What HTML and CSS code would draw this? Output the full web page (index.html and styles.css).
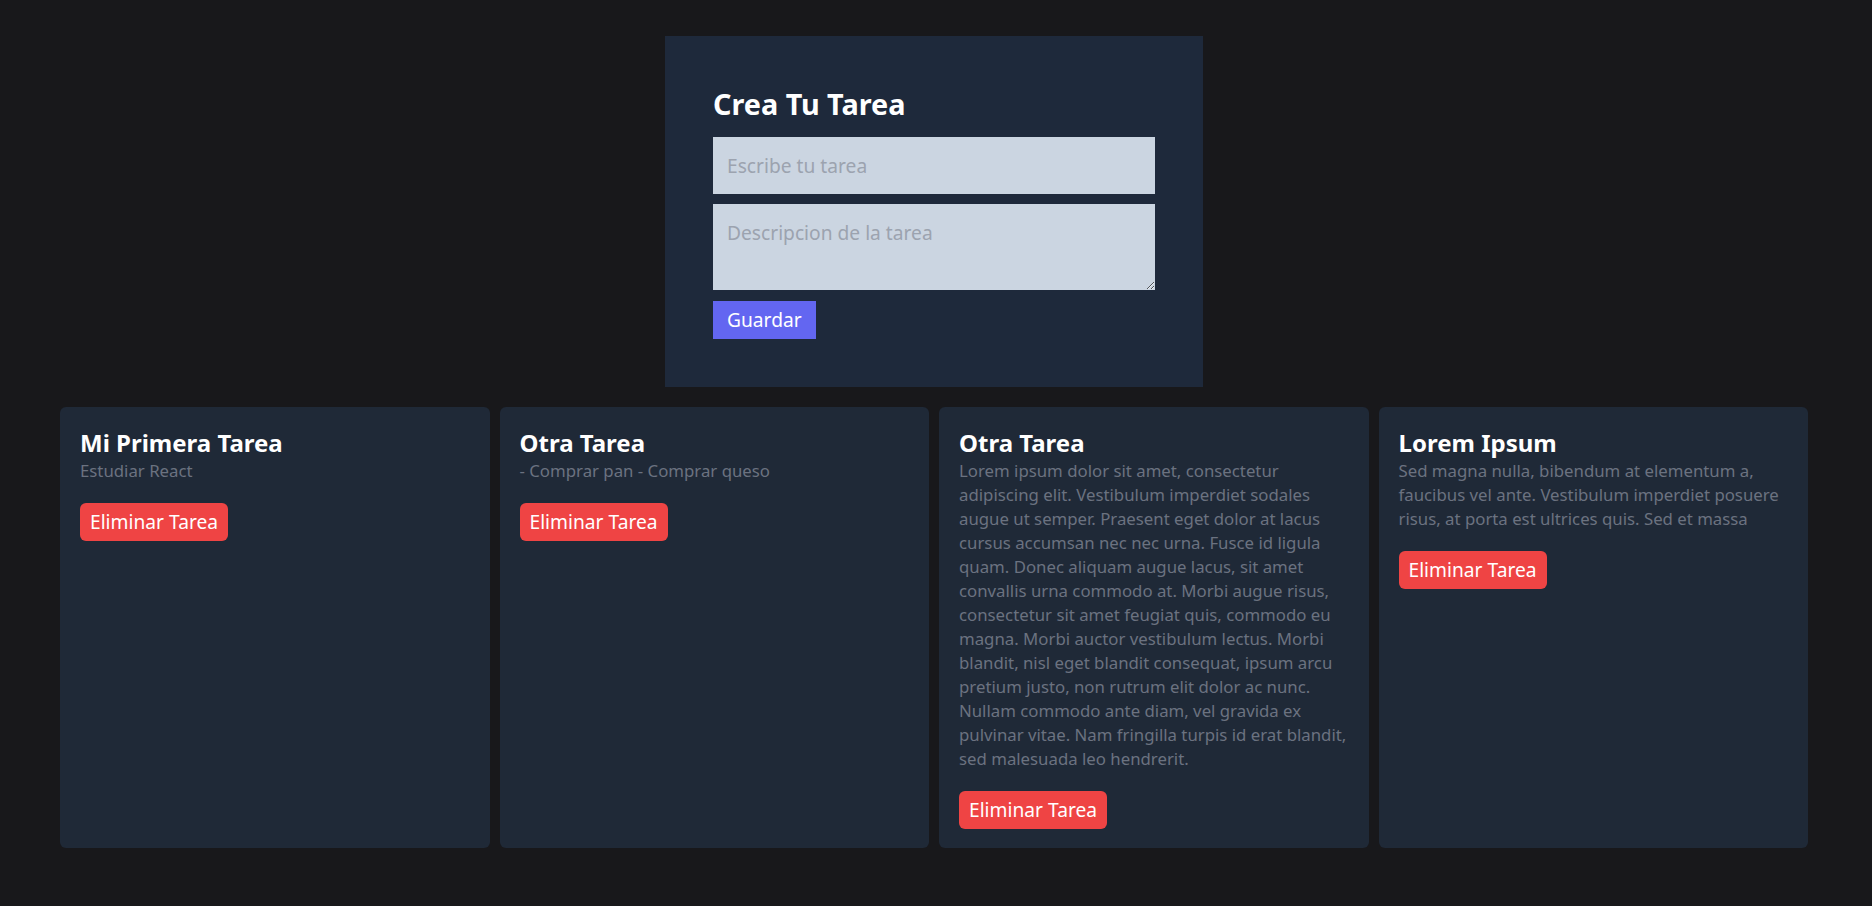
FILE: index.html
```html
<!DOCTYPE html>
<html lang="es">
<head>
<meta charset="utf-8">
<title>Tareas</title>
<link rel="stylesheet" href="styles.css">
</head>
<body>
<div class="app">
  <form class="task-form">
    <h1 class="form-title">Crea Tu Tarea</h1>
    <input class="field field-input" type="text" placeholder="Escribe tu tarea">
    <textarea class="field field-area" rows="2" placeholder="Descripcion de la tarea"></textarea>
    <button class="btn-save" type="button">Guardar</button>
  </form>

  <div class="task-grid">
    <div class="task-card">
      <h2 class="task-title">Mi Primera Tarea</h2>
      <p class="task-desc">Estudiar React</p>
      <button class="btn-delete" type="button">Eliminar Tarea</button>
    </div>
    <div class="task-card">
      <h2 class="task-title">Otra Tarea</h2>
      <p class="task-desc">- Comprar pan - Comprar queso</p>
      <button class="btn-delete" type="button">Eliminar Tarea</button>
    </div>
    <div class="task-card">
      <h2 class="task-title">Otra Tarea</h2>
      <p class="task-desc">Lorem ipsum dolor sit amet, consectetur adipiscing elit. Vestibulum imperdiet sodales augue ut semper. Praesent eget dolor at lacus cursus accumsan nec nec urna. Fusce id ligula quam. Donec aliquam augue lacus, sit amet convallis urna commodo at. Morbi augue risus, consectetur sit amet feugiat quis, commodo eu magna. Morbi auctor vestibulum lectus. Morbi blandit, nisl eget blandit consequat, ipsum arcu pretium justo, non rutrum elit dolor ac nunc. Nullam commodo ante diam, vel gravida ex pulvinar vitae. Nam fringilla turpis id erat blandit, sed malesuada leo hendrerit.</p>
      <button class="btn-delete" type="button">Eliminar Tarea</button>
    </div>
    <div class="task-card">
      <h2 class="task-title">Lorem Ipsum</h2>
      <p class="task-desc">Sed magna nulla, bibendum at elementum a, faucibus vel ante. Vestibulum imperdiet posuere risus, at porta est ultrices quis. Sed et massa</p>
      <button class="btn-delete" type="button">Eliminar Tarea</button>
    </div>
  </div>
</div>
</body>
</html>
```

FILE: styles.css
```css
* {
  box-sizing: border-box;
}

html, body {
  margin: 0;
  padding: 0;
  background: #18181b;
}

body {
  font-family: "Noto Sans", "Open Sans", sans-serif;
  color: #ffffff;
}

.app {
  padding: 36px 4px 0 0;
}

.task-form {
  width: 538px;
  margin: 0 auto;
  background: #1e293b;
  padding: 48px;
  display: flex;
  flex-direction: column;
  align-items: flex-start;
}

.form-title {
  margin: 0 0 14px 0;
  font-size: 28.8px;
  line-height: normal;
  font-weight: 700;
  color: #ffffff;
}

.field {
  display: block;
  width: 100%;
  border: 0;
  outline: none;
  background: #cbd5e1;
  color: #111827;
  font-family: "Noto Sans", "Open Sans", sans-serif;
  font-size: 19.2px;
  line-height: normal;
  padding: 14px 14px;
  margin: 0;
  border-radius: 0;
}

.field::placeholder {
  color: #9ca3af;
  opacity: 1;
}

.field-input {
  height: 57px;
  margin-bottom: 10px;
}

.field-area {
  height: 86px;
  padding-top: 15px;
  resize: vertical;
  margin-bottom: 11px;
}

.btn-save {
  border: 0;
  background: #6366f1;
  color: #ffffff;
  font-family: "Noto Sans", "Open Sans", sans-serif;
  font-size: 19.2px;
  line-height: 28px;
  padding: 5px 14px;
  margin: 0;
  border-radius: 0;
  cursor: pointer;
}

.task-grid {
  margin: 20px 60px 0 60px;
  display: grid;
  grid-template-columns: repeat(4, 1fr);
  gap: 10px;
}

.task-card {
  background: #1f2937;
  border-radius: 6px;
  padding: 20px;
  height: 441px;
}

.task-title {
  margin: 0;
  font-size: 24px;
  line-height: 32px;
  font-weight: 700;
  color: #ffffff;
}

.task-desc {
  margin: 0;
  font-size: 16.8px;
  line-height: 24px;
  color: #6b7280;
}

.btn-delete {
  margin-top: 20px;
  border: 0;
  background: #ef4444;
  color: #ffffff;
  font-family: "Noto Sans", "Open Sans", sans-serif;
  font-size: 19.2px;
  line-height: 28px;
  padding: 5px 10px;
  border-radius: 6px;
  cursor: pointer;
}
```
